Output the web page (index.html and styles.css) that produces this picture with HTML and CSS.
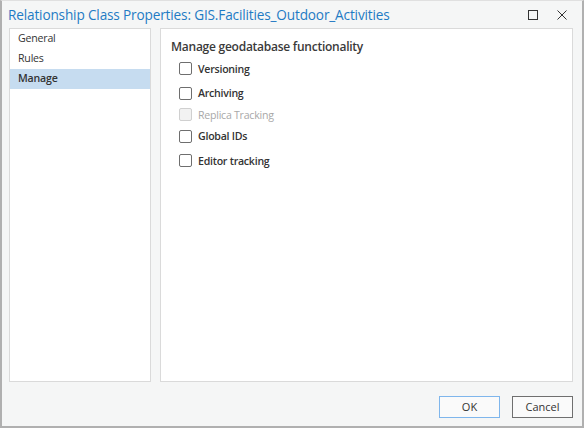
FILE: index.html
```html
<!DOCTYPE html>
<html>
<head>
<meta charset="utf-8">
<link rel="stylesheet" href="styles.css">
</head>
<body>
<div class="window">
  <div class="titlebar">
    <div class="title">Relationship Class Properties: GIS.Facilities_Outdoor_Activities</div>
    <div class="controls">
      <svg class="ctl" width="12" height="12" viewBox="0 0 12 12"><rect x="1.5" y="1.5" width="9" height="9" fill="none" stroke="#333" stroke-width="1"/></svg>
      <svg class="ctl" width="12" height="12" viewBox="0 0 12 12"><path d="M1.5 1.5 L10.5 10.5 M10.5 1.5 L1.5 10.5" stroke="#333" stroke-width="1"/></svg>
    </div>
  </div>
  <div class="body">
    <div class="nav">
      <div class="nav-item">General</div>
      <div class="nav-item">Rules</div>
      <div class="nav-item selected">Manage</div>
    </div>
    <div class="content">
      <div class="heading">Manage geodatabase functionality</div>
      <div class="opts">
        <label class="opt"><span class="box"></span>Versioning</label>
        <label class="opt gap"><span class="box"></span>Archiving</label>
        <label class="opt disabled"><span class="box"></span>Replica Tracking</label>
        <label class="opt"><span class="box"></span>Global IDs</label>
        <label class="opt gap"><span class="box"></span>Editor tracking</label>
      </div>
    </div>
  </div>
  <div class="footer">
    <button class="btn primary">OK</button>
    <button class="btn">Cancel</button>
  </div>
</div>
</body>
</html>
```
FILE: styles.css
```css
html, body {
  margin: 0;
  padding: 0;
}
body {
  width: 584px;
  height: 428px;
  overflow: hidden;
  font-family: "Open Sans", "Noto Sans", sans-serif;
  background: #fff;
}
.window {
  box-sizing: border-box;
  width: 584px;
  height: 428px;
  background: #f5f6f6;
  border: 1px solid #b0b0b0;
  border-left-width: 2px;
  border-bottom-width: 2px;
  border-right-width: 2px;
  border-top-color: #e0e0e0;
  display: flex;
  flex-direction: column;
}
.titlebar {
  height: 27px;
  display: flex;
  align-items: center;
  padding-left: 6px;
  padding-right: 14px;
}
.title {
  flex: 1;
  font-size: 13.6px;
  color: #1f7bc4;
  letter-spacing: -0.15px;
  white-space: nowrap;
}
.controls {
  display: flex;
  gap: 17px;
  align-items: center;
}
.ctl { display: block; }
.body {
  display: flex;
  gap: 9px;
  padding: 0 9px 0 7px;
  height: 354px;
}
.nav {
  width: 140px;
  background: #fff;
  border: 1px solid #dadada;
}
.nav-item {
  height: 20px;
  line-height: 19px;
  padding-left: 8px;
  font-size: 10.6px;
  letter-spacing: -0.2px;
  color: #333;
}
.nav-item.selected {
  background: #c6dcf0;
  font-weight: 600;
}
.content {
  flex: 1;
  background: #fff;
  border: 1px solid #dadada;
  padding: 9px 10px 8px;
}
.heading {
  font-size: 12px;
  font-weight: 600;
  color: #3a3a3a;
  letter-spacing: -0.25px;
}
.opts {
  display: flex;
  flex-direction: column;
  padding-left: 8px;
  margin-top: 3px;
}
.opt {
  display: flex;
  align-items: center;
  gap: 6px;
  height: 21.5px;
  font-size: 10.6px;
  font-weight: 600;
  letter-spacing: -0.25px;
  color: #333;
}
.opt.gap { margin-top: 3px; }
.box {
  box-sizing: border-box;
  width: 13px;
  height: 13px;
  border: 1px solid #6e6e6e;
  border-radius: 2px;
  background: #fff;
}
.opt.disabled { color: #a8a8a8; font-weight: 400; }
.opt.disabled .box { border-color: #d0d0d0; background: #f2f2f2; }
.footer {
  flex: 1;
  display: flex;
  justify-content: flex-end;
  align-items: center;
  gap: 12px;
  padding-right: 9px;
  padding-top: 5px;
}
.btn {
  box-sizing: border-box;
  width: 61px;
  height: 22px;
  background: #fafafa;
  border: 1px solid #6f6f6f;
  font-family: "Open Sans", "Noto Sans", sans-serif;
  font-size: 11px;
  color: #333;
  padding: 0;
}
.btn.primary {
  border-color: #7fb6ec;
}
```
